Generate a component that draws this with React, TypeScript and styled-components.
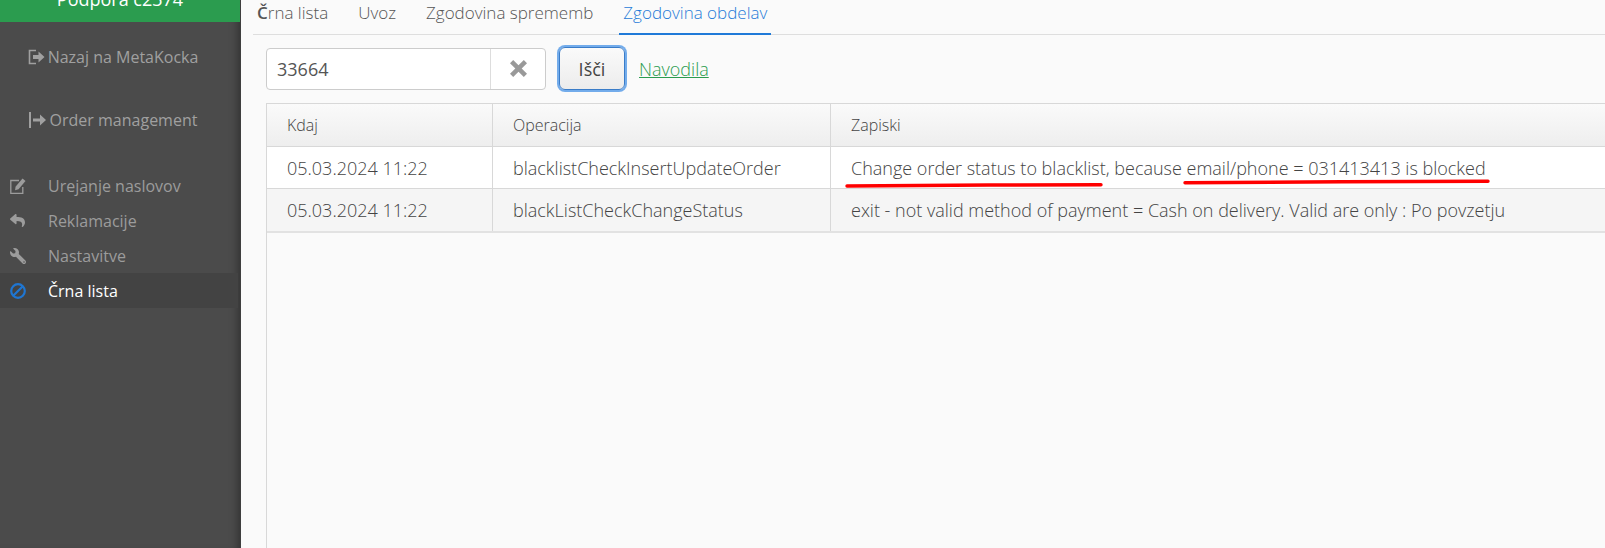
import React from 'react';
import styled, { createGlobalStyle } from 'styled-components';
import { FaReply, FaWrench } from 'react-icons/fa';

const GlobalStyle = createGlobalStyle`
  html, body, #root {
    margin: 0;
    height: 100%;
    overflow: hidden;
  }
  body {
    font-family: "Open Sans", "Liberation Sans", sans-serif;
    background: #fafafa;
  }
`;

const Page = styled.div`
  display: flex;
  height: 548px;
  width: 1605px;
`;

const Sidebar = styled.aside`
  width: 240px;
  flex: none;
  background: #4b4b4b;
  box-shadow: inset -8px 0 8px -6px rgba(0, 0, 0, 0.35), 1px 0 0 #3f3f3f;
  color: #9c9c9c;
`;

const SupportHeader = styled.div`
  height: 22px;
  background: #2b9c4f;
  color: #fff;
  font-size: 18px;
  line-height: 24px;
  text-align: center;
  display: flex;
  justify-content: center;
  align-items: flex-end;
  overflow: hidden;
`;

const SupportLabel = styled.span`
  display: block;
  position: relative;
  top: -11px;
`;

const BigLinks = styled.div`
  display: flex;
  flex-direction: column;
  gap: 40px;
  padding: 23px 14px 0 0;
`;

const BigLink = styled.a`
  display: flex;
  justify-content: center;
  align-items: center;
  gap: 3px;
  height: 23px;
  font-size: 16px;
  color: #a0a0a0;
`;

const Menu = styled.nav`
  display: flex;
  flex-direction: column;
  margin-top: 37px;
`;

const MenuItem = styled.a<{ $active?: boolean }>`
  display: flex;
  align-items: center;
  height: 35px;
  width: 238px;
  padding-left: 10px;
  box-sizing: border-box;
  font-size: 16px;
  color: ${props => (props.$active ? '#fff' : '#9c9c9c')};
  background: ${props => (props.$active ? '#434343' : 'transparent')};
`;

const MenuIcon = styled.span<{ $active?: boolean }>`
  width: 38px;
  flex: none;
  display: flex;
  align-items: center;
  color: ${props => (props.$active ? '#1f76d2' : '#9c9c9c')};
`;

const FlippedWrench = styled(FaWrench)`
  transform: scaleX(-1);
`;

const Main = styled.main`
  flex: 1;
  min-width: 0;
  display: flex;
  flex-direction: column;
  padding-left: 13px;
`;

const Tabs = styled.div`
  display: flex;
  gap: 22px;
  height: 34px;
  border-bottom: 1px solid #dedede;
`;

const Tab = styled.a<{ $active?: boolean }>`
  padding: 0 4px;
  height: 35px;
  line-height: 25px;
  font-size: 17px;
  font-weight: 300;
  box-sizing: border-box;
  color: ${props => (props.$active ? '#1f7ad8' : '#555')};
  border-bottom: 2px solid ${props => (props.$active ? '#1f7ad8' : 'transparent')};
`;

const BoldLetter = styled.span`
  font-weight: 600;
`;

const SearchRow = styled.div`
  display: flex;
  align-items: center;
  padding: 12px 0 13px 13px;
`;

const SearchGroup = styled.div`
  display: flex;
  width: 280px;
  height: 42px;
  box-sizing: border-box;
  background: #fff;
  border: 1px solid #ccc;
  border-radius: 4px;
`;

const SearchInput = styled.input`
  flex: 1;
  min-width: 0;
  border: 0;
  outline: 0;
  background: transparent;
  padding: 0 10px;
  font: 400 18px "Open Sans", sans-serif;
  color: #555;
`;

const ClearButton = styled.span`
  width: 54px;
  flex: none;
  display: flex;
  align-items: center;
  justify-content: center;
  border-left: 1px solid #ddd;
`;

const SearchButton = styled.button`
  margin-left: 13px;
  width: 66px;
  height: 43px;
  box-sizing: border-box;
  border: 1px solid #3a7cc8;
  border-radius: 6px;
  background: linear-gradient(#fafafa, #ececec);
  box-shadow: 0 0 0 2px rgba(70, 145, 230, 0.75);
  font: 400 18px "Open Sans", sans-serif;
  color: #444;
`;

const GuideLink = styled.a`
  margin-left: 14px;
  font-size: 18px;
  font-weight: 300;
  color: #2b9c4f;
  text-decoration: underline;
`;

const TablePanel = styled.div`
  margin-left: 13px;
  flex: 1;
  border-top: 1px solid #d8d8d8;
  border-left: 1px solid #d8d8d8;
`;

const Row = styled.div<{ $bg: string; $height: number }>`
  display: grid;
  grid-template-columns: 226px 338px 1fr;
  height: ${props => props.$height}px;
  box-sizing: border-box;
  background: ${props => props.$bg};
  border-bottom: 1px solid #d8d8d8;
  &:last-child {
    border-bottom: 2px solid #e2e2e2;
  }
`;

const Cell = styled.div`
  position: relative;
  display: flex;
  align-items: center;
  padding-left: 20px;
  font-size: 18px;
  font-weight: 300;
  color: #444;
  white-space: nowrap;
  border-right: 1px solid #d8d8d8;
  &:last-child {
    border-right: 0;
  }
`;

const HeadCell = styled(Cell)`
  font-size: 16px;
`;

const Scribble = styled.svg`
  position: absolute;
  left: 0;
  top: 0;
  overflow: visible;
  pointer-events: none;
`;

const App = () => {
  return (
    <Page>
      <GlobalStyle />
      <Sidebar>
        <SupportHeader>
          <SupportLabel>Podpora c2374</SupportLabel>
        </SupportHeader>
        <BigLinks>
          <BigLink>
            <svg width="17" height="16" viewBox="0 0 17 16" fill="none">
              <path d="M8 1.5H1.5v13H8" stroke="#a0a0a0" strokeWidth="1.6" />
              <path d="M5 6h5.5V2.5L16.5 8l-6 5.5V10H5z" fill="#a0a0a0" />
            </svg>
            Nazaj na MetaKocka
          </BigLink>
          <BigLink>
            <svg width="18" height="16" viewBox="0 0 18 16">
              <path d="M0 0h2v16H0z" fill="#a0a0a0" />
              <path d="M4 6.5h7V2.5L17 8l-6 5.5V9.5H4z" fill="#a0a0a0" />
            </svg>
            Order management
          </BigLink>
        </BigLinks>
        <Menu>
          <MenuItem>
            <MenuIcon>
              <svg width="16" height="16" viewBox="0 0 16 16" fill="none">
                <path d="M9 2.5H.8v13h12V9" stroke="#9c9c9c" strokeWidth="1.3" />
                <path d="M12.5 0.5l3 2.5-7 8.2-3.4 1 .4-3.4z" fill="#9c9c9c" />
              </svg>
            </MenuIcon>
            Urejanje naslovov
          </MenuItem>
          <MenuItem>
            <MenuIcon>
              <FaReply size={15} />
            </MenuIcon>
            Reklamacije
          </MenuItem>
          <MenuItem>
            <MenuIcon>
              <FlippedWrench size={16} />
            </MenuIcon>
            Nastavitve
          </MenuItem>
          <MenuItem $active>
            <MenuIcon $active>
              <svg width="16" height="16" viewBox="0 0 16 16" fill="none">
                <circle cx="8" cy="8" r="6.8" stroke="#1f76d2" strokeWidth="2.2" />
                <path d="M3.2 12.8 12.8 3.2" stroke="#1f76d2" strokeWidth="2.2" />
              </svg>
            </MenuIcon>
            Črna lista
          </MenuItem>
        </Menu>
      </Sidebar>
      <Main>
        <Tabs>
          <Tab><BoldLetter>Č</BoldLetter>rna lista</Tab>
          <Tab>Uvoz</Tab>
          <Tab>Zgodovina sprememb</Tab>
          <Tab $active>Zgodovina obdelav</Tab>
        </Tabs>
        <SearchRow>
          <SearchGroup>
            <SearchInput defaultValue="33664" />
            <ClearButton>
              <svg width="17" height="17" viewBox="0 0 16 16">
                <path d="M3 0 8 5l5-5 3 3-5 5 5 5-3 3-5-5-5 5-3-3 5-5-5-5z" fill="#999" />
              </svg>
            </ClearButton>
          </SearchGroup>
          <SearchButton>Išči</SearchButton>
          <GuideLink>Navodila</GuideLink>
        </SearchRow>
        <TablePanel>
          <Row $bg="linear-gradient(#fafafa, #eeeeee)" $height={43}>
            <HeadCell>Kdaj</HeadCell>
            <HeadCell>Operacija</HeadCell>
            <HeadCell>Zapiski</HeadCell>
          </Row>
          <Row $bg="#fff" $height={42}>
            <Cell>05.03.2024 11:22</Cell>
            <Cell>blacklistCheckInsertUpdateOrder</Cell>
            <Cell>
              Change order status to blacklist, because email/phone = 031413413 is blocked
              <Scribble width="660" height="42">
                <path d="M16 39 C90 38.5 190 37.7 270 37.7" stroke="#f00" strokeWidth="3.4" strokeLinecap="round" fill="none" />
                <path d="M354 35.7 C450 35.2 560 34.3 657 34.3" stroke="#f00" strokeWidth="3.4" strokeLinecap="round" fill="none" />
              </Scribble>
            </Cell>
          </Row>
          <Row $bg="#f5f5f5" $height={44}>
            <Cell>05.03.2024 11:22</Cell>
            <Cell>blackListCheckChangeStatus</Cell>
            <Cell>exit - not valid method of payment = Cash on delivery. Valid are only : Po povzetju</Cell>
          </Row>
        </TablePanel>
      </Main>
    </Page>
  );
};

export default App;
